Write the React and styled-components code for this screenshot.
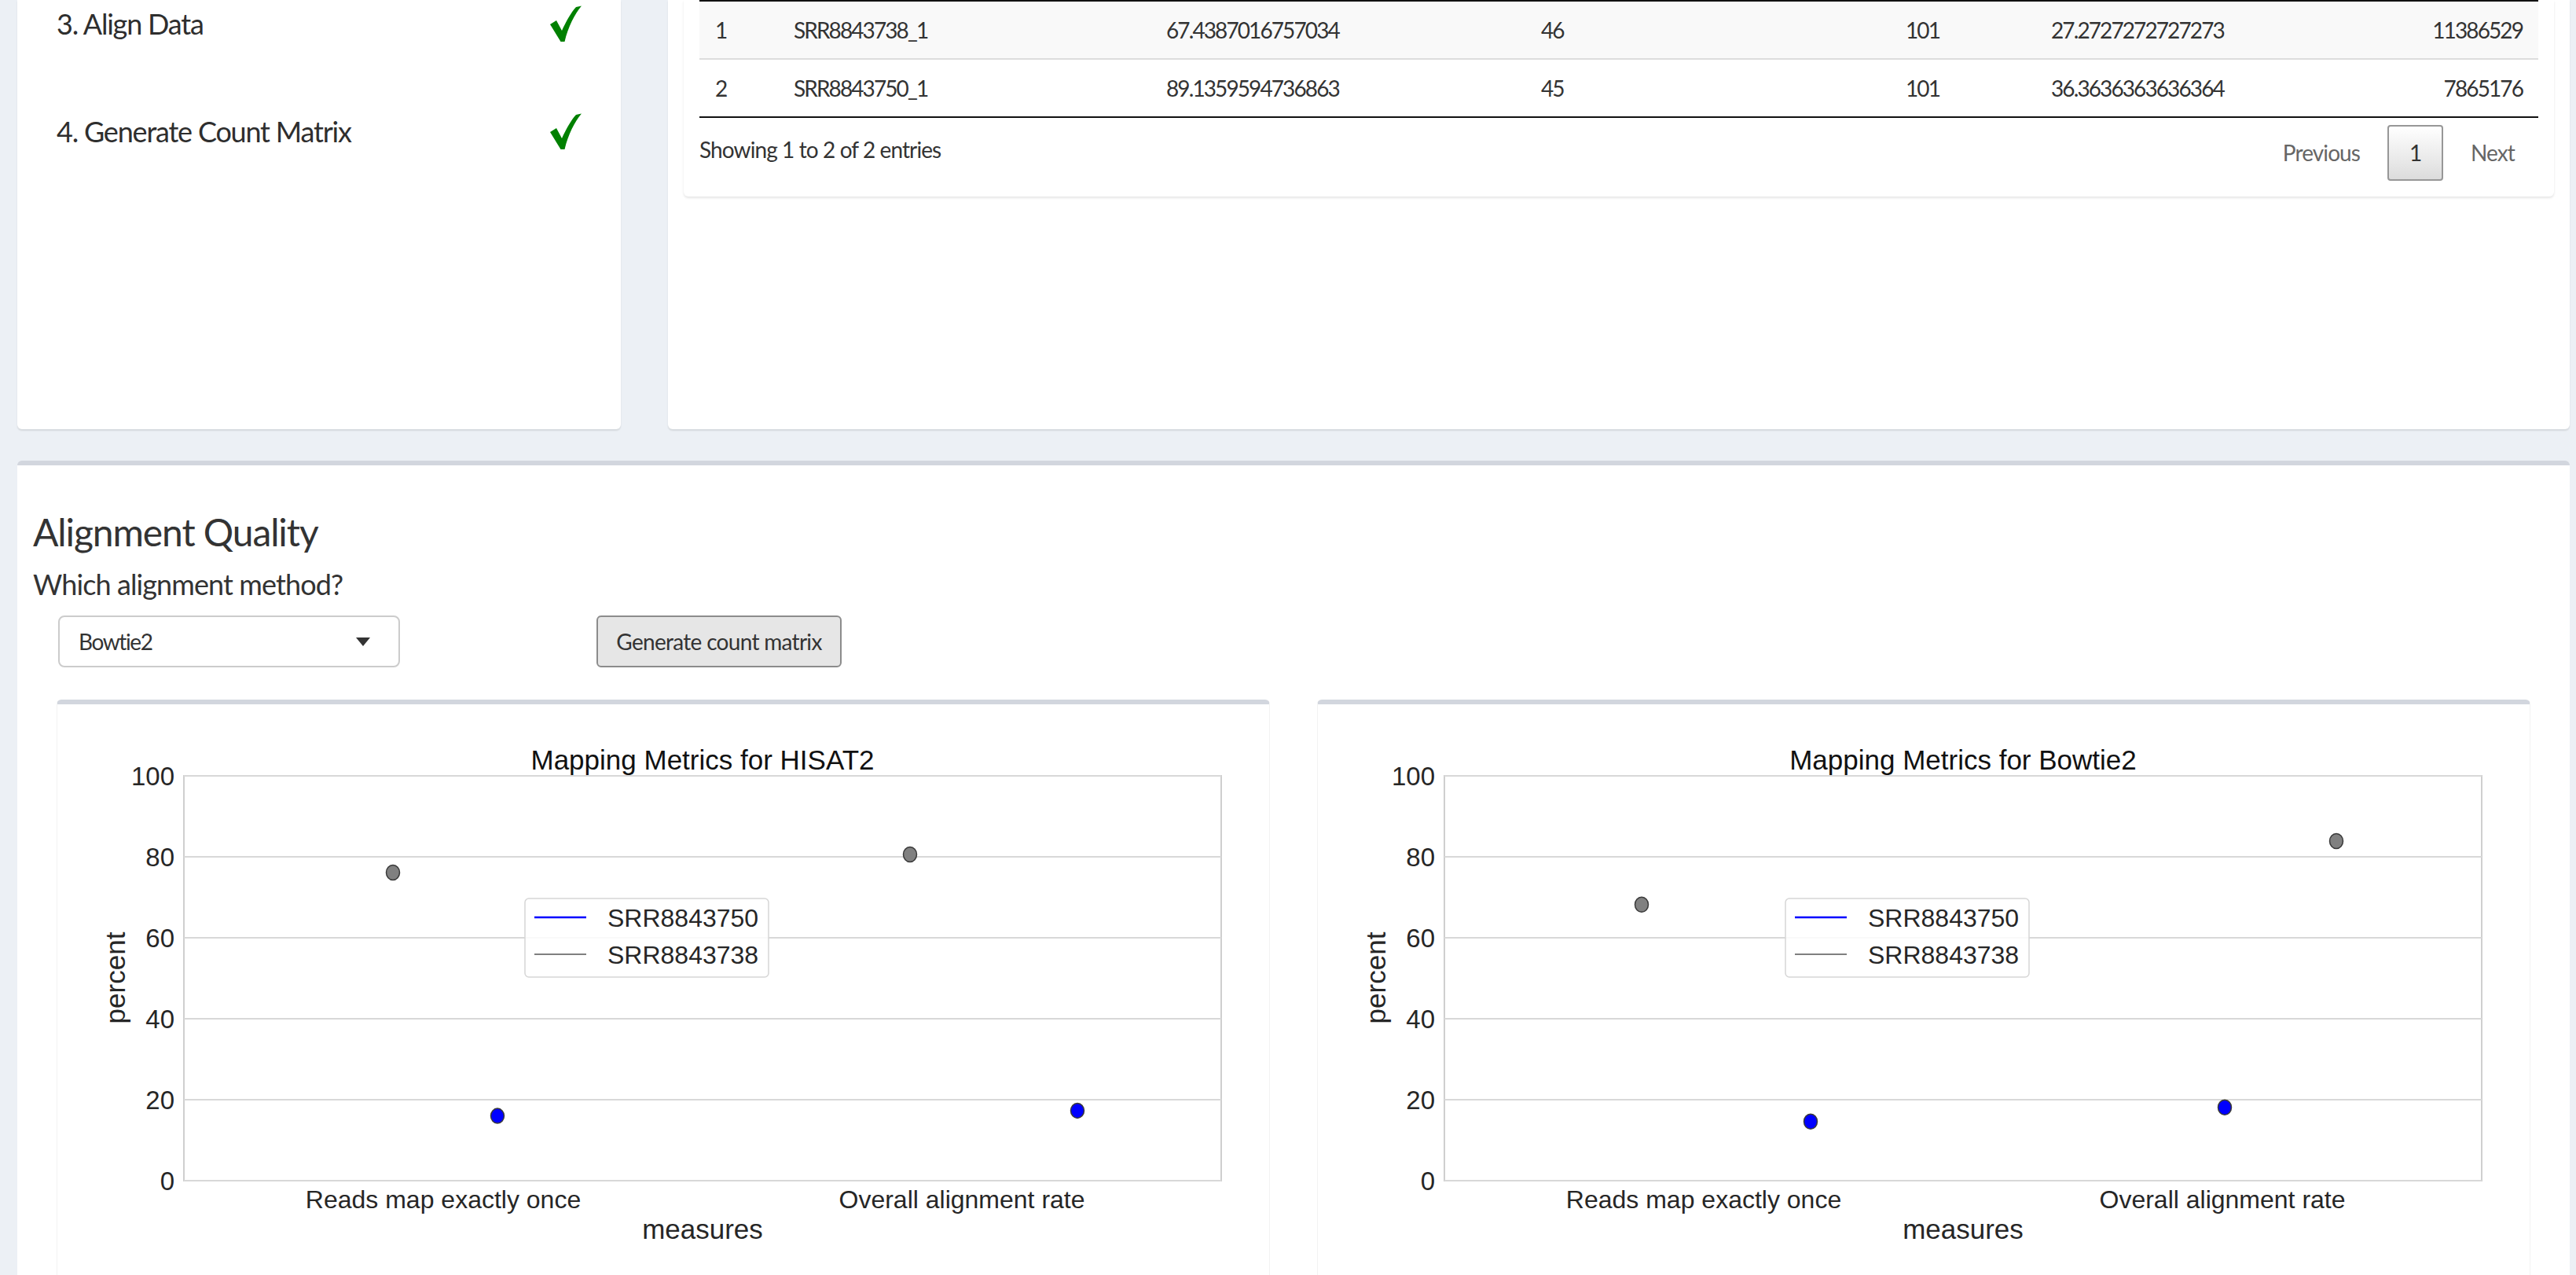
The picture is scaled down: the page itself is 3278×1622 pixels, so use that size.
import React from 'react';
import styled, { createGlobalStyle } from 'styled-components';

const GlobalStyle = createGlobalStyle`
  html, body { margin: 0; padding: 0; background: #ecf0f5; }
  body { font-family: Lato, "Noto Sans", sans-serif; color: #333; overflow: hidden; }
  * { box-sizing: border-box; }
`;

const Page = styled.div`
  width: 3278px;
  height: 1622px;
  overflow: hidden;
  padding: 0 8px 0 22px;
  display: flex;
  flex-direction: column;
  gap: 40px;
`;

const TopRow = styled.div`
  display: flex;
  gap: 60px;
  height: 546px;
  flex: none;
`;

const Card = styled.div`
  background: #fff;
  border-radius: 0 0 6px 6px;
  box-shadow: 0 2px 2px rgba(0, 0, 0, 0.1);
  width: ${(p) => (p.$w ? `${p.$w}px` : 'auto')};
  flex: ${(p) => (p.$w ? 'none' : '1')};
  padding: ${(p) => p.$pad || '0'};
`;

const StepList = styled.div`
  display: flex;
  flex-direction: column;
  gap: 77px;
  padding: 0 50px;
`;

const Step = styled.div`
  height: 60px;
  display: flex;
  align-items: center;
  justify-content: space-between;
  font-size: 36px;
  letter-spacing: -1.2px;
  color: #2e2e2e;
`;

const Check = () => (
  <svg width="40" height="46" viewBox="0 0 40 46">
    <path d="M0 24 L8 19 L15 32 C20 21 26.5 9 33 2 L40 0.5 C31 11.5 23 27 18.5 46 L13.5 46 Z" fill="#008000" />
  </svg>
);

const TableBox = styled.div`
  background: #fff;
  border-radius: 0 0 6px 6px;
  box-shadow: 0 2px 3px rgba(0, 0, 0, 0.1);
  padding: 0 20px 20px;
`;

const Row = styled.div`
  display: grid;
  grid-template-columns: 100px 474px 477px 464px 185px 1fr 200px;
  height: ${(p) => (p.$first ? 74 : 76)}px;
  align-items: center;
  background: ${(p) => (p.$odd ? '#f9f9f9' : '#fff')};
  border-top: 2px solid ${(p) => (p.$first ? '#111' : '#ddd')};
  ${(p) => p.$last && 'border-bottom: 2px solid #111; height: 76px;'}
  font-size: 28px;
`;

const Cell = styled.div`
  padding: 0 20px;
  text-align: ${(p) => (p.$right ? 'right' : 'left')};
  white-space: nowrap;
  letter-spacing: -1.9px;
`;

const Footer = styled.div`
  display: flex;
  justify-content: space-between;
  align-items: center;
  padding-top: 8px;
  height: 80px;
  font-size: 28px;
  letter-spacing: -0.9px;
`;

const Info = styled.div`
  padding-bottom: 8px;
`;

const Pager = styled.div`
  display: flex;
  align-items: center;
  gap: 18px;
  margin-right: 13px;
  height: 71px;
`;

const PageLink = styled.span`
  padding: 0 17px;
  color: #666;
`;

const PageCurrent = styled.span`
  width: 71px;
  height: 71px;
  display: flex;
  align-items: center;
  justify-content: center;
  border: 2px solid #979797;
  border-radius: 4px;
  background: linear-gradient(to bottom, #fff 0%, #dcdcdc 100%);
  color: #333;
`;

const BigBox = styled.div`
  flex: 1;
  background: #fff;
  border-top: 6px solid #d2d6de;
  border-radius: 6px 6px 0 0;
  padding: 0 20px;
  display: flex;
  flex-direction: column;
`;

const Heading = styled.h3`
  margin: 58px 0 0;
  font-size: 48px;
  line-height: 53px;
  font-weight: 400;
  letter-spacing: -1.1px;
`;

const Label = styled.div`
  margin-top: 17px;
  font-size: 36px;
  line-height: 46px;
  letter-spacing: -0.9px;
`;

const Controls = styled.div`
  margin-top: 17px;
  padding-left: 32px;
  display: flex;
  align-items: center;
  gap: 250px;
`;

const Select = styled.div`
  width: 435px;
  height: 66px;
  border: 2px solid #ccc;
  border-radius: 8px;
  display: flex;
  align-items: center;
  justify-content: space-between;
  padding: 0 36px 0 24px;
  font-size: 28px;
  letter-spacing: -1.4px;
`;

const Caret = styled.span`
  width: 0;
  height: 0;
  border-left: 9px solid transparent;
  border-right: 9px solid transparent;
  border-top: 11px solid #333;
`;

const Button = styled.div`
  width: 312px;
  height: 66px;
  border: 2px solid #8c8c8c;
  border-radius: 6px;
  background: #e6e6e6;
  display: flex;
  align-items: center;
  justify-content: center;
  font-size: 28px;
  letter-spacing: -0.7px;
  color: #333;
`;

const PlotRow = styled.div`
  margin-top: 41px;
  padding: 0 30px;
  display: flex;
  gap: 60px;
  flex: 1;
`;

const PlotBox = styled.div`
  flex: 1;
  background: #fff;
  border-top: 6px solid #d2d6de;
  border-left: 1px solid #f2f2f2;
  border-right: 1px solid #f2f2f2;
  border-radius: 6px 6px 0 0;
  overflow: hidden;
`;

const FRAME = { x0: 161, x1: 1481, y0: 91, y1: 606 };
const yOf = (v) => FRAME.y1 - (v / 100) * (FRAME.y1 - FRAME.y0);

const Chart = ({ title, points }) => {
  const ticks = [0, 20, 40, 60, 80, 100];
  const cx = (FRAME.x0 + FRAME.x1) / 2;
  return (
    <svg width="1542" height="730" viewBox="0 0 1542 730" fontFamily="'Liberation Sans', Arial, sans-serif">
      <rect x={FRAME.x0} y={FRAME.y0} width={FRAME.x1 - FRAME.x0} height={FRAME.y1 - FRAME.y0} fill="#fff" stroke="#cfcfcf" strokeWidth="2" />
      {ticks.map((t) => (
        <g key={t}>
          <line x1={FRAME.x0} x2={FRAME.x1} y1={yOf(t)} y2={yOf(t)} stroke="#d8d8d8" strokeWidth="2" />
          <text x={FRAME.x0 - 12} y={yOf(t) + 11.5} textAnchor="end" fontSize="33" fill="#262626">{t}</text>
        </g>
      ))}
      <text x={cx} y={83} textAnchor="middle" fontSize="35" fill="#111">{title}</text>
      <text x={491} y={641} textAnchor="middle" fontSize="32" fill="#262626">Reads map exactly once</text>
      <text x={1151} y={641} textAnchor="middle" fontSize="32" fill="#262626">Overall alignment rate</text>
      <text x={cx} y={680} textAnchor="middle" fontSize="35" fill="#262626">measures</text>
      <text x={0} y={0} transform="translate(86 348) rotate(-90)" textAnchor="middle" fontSize="35" fill="#262626">percent</text>
      {points.map((p, i) => (
        <ellipse key={i} cx={p.x} cy={yOf(p.v)} rx="8.5" ry="9.5" fill={p.c} stroke="#3a3a3a" strokeWidth="1.5" />
      ))}
      <rect x="595" y="247" width="310" height="100" rx="5" fill="#fff" fillOpacity="0.85" stroke="#d6d6d6" strokeWidth="1.5" />
      <line x1="607" x2="673" y1="271" y2="271" stroke="#0000ff" strokeWidth="2.5" />
      <text x="700" y="283" fontSize="32" fill="#262626">SRR8843750</text>
      <line x1="607" x2="673" y1="318" y2="318" stroke="#808080" strokeWidth="2" />
      <text x="700" y="330" fontSize="32" fill="#262626">SRR8843738</text>
    </svg>
  );
};

const rows = [
  ['1', 'SRR8843738_1', '67.4387016757034', '46', '101', '27.2727272727273', '11386529'],
  ['2', 'SRR8843750_1', '89.1359594736863', '45', '101', '36.3636363636364', '7865176'],
];

const hisatPoints = [
  { x: 427, v: 76.1, c: '#808080' },
  { x: 560, v: 16.0, c: '#0000ff' },
  { x: 1085, v: 80.6, c: '#808080' },
  { x: 1298, v: 17.3, c: '#0000ff' },
];

const bowtiePoints = [
  { x: 412, v: 68.2, c: '#808080' },
  { x: 627, v: 14.6, c: '#0000ff' },
  { x: 1154, v: 18.1, c: '#0000ff' },
  { x: 1296, v: 83.9, c: '#808080' },
];

export default function App() {
  return (
    <>
      <GlobalStyle />
      <Page>
        <TopRow>
          <Card $w={768}>
            <StepList>
              <Step>
                <span>3. Align Data</span>
                <Check />
              </Step>
              <Step>
                <span>4. Generate Count Matrix</span>
                <Check />
              </Step>
            </StepList>
          </Card>
          <Card $pad="0 20px">
            <TableBox>
              {rows.map((r, i) => (
                <Row key={i} $first={i === 0} $odd={i === 0} $last={i === rows.length - 1}>
                  {r.map((c, j) => (
                    <Cell key={j} $right={j === r.length - 1}>{c}</Cell>
                  ))}
                </Row>
              ))}
              <Footer>
                <Info>Showing 1 to 2 of 2 entries</Info>
                <Pager>
                  <PageLink>Previous</PageLink>
                  <PageCurrent>1</PageCurrent>
                  <PageLink>Next</PageLink>
                </Pager>
              </Footer>
            </TableBox>
          </Card>
        </TopRow>
        <BigBox>
          <Heading>Alignment Quality</Heading>
          <Label>Which alignment method?</Label>
          <Controls>
            <Select>
              <span>Bowtie2</span>
              <Caret />
            </Select>
            <Button>Generate count matrix</Button>
          </Controls>
          <PlotRow>
            <PlotBox>
              <Chart title="Mapping Metrics for HISAT2" points={hisatPoints} />
            </PlotBox>
            <PlotBox>
              <Chart title="Mapping Metrics for Bowtie2" points={bowtiePoints} />
            </PlotBox>
          </PlotRow>
        </BigBox>
      </Page>
    </>
  );
}
